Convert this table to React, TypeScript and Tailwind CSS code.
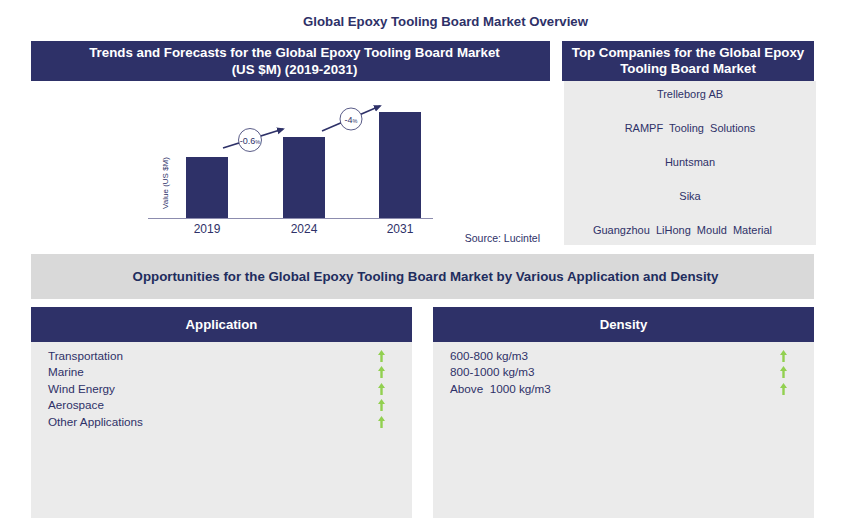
const applications = ['Transportation', 'Marine', 'Wind Energy', 'Aerospace', 'Other Applications'];
const densities = ['600-800 kg/m3', '800-1000 kg/m3', 'Above  1000 kg/m3'];
const companies = ['Trelleborg AB', 'RAMPF  Tooling  Solutions', 'Huntsman', 'Sika', 'Guangzhou  LiHong  Mould  Material'];

const bars = [
    { year: '2019', x: 155, top: 76 },
    { year: '2024', x: 252, top: 56 },
    { year: '2031', x: 348, top: 31 },
];

const UpArrow = () => (
    <svg width="7" height="12" viewBox="0 0 7 12">
        <polygon points="3.5,0 7,5 4.7,5 4.7,12 2.3,12 2.3,5 0,5" fill="#92d050" />
    </svg>
);

const Chart = () => (
    <svg width="519" height="164" viewBox="0 0 519 164" style={{ fontFamily: '"Liberation Sans", Arial, sans-serif' }}>
        <defs>
            <marker id="head" markerWidth="8" markerHeight="8" refX="6" refY="4" orient="auto" markerUnits="userSpaceOnUse">
                <polygon points="0,0.5 8,4 0,7.5" fill="#2e3168" />
            </marker>
        </defs>
        {bars.map((b) => (
            <g key={b.year}>
                <rect x={b.x} y={b.top} width="42" height={137 - b.top} fill="#2e3168" />
                <text x={b.x + 21} y="151.5" textAnchor="middle" fontSize="12" fill="#2e3168">{b.year}</text>
            </g>
        ))}
        <line x1="117" y1="137.5" x2="402" y2="137.5" stroke="#8c8cae" strokeWidth="1.2" />
        <text transform="translate(137 102) rotate(-90)" textAnchor="middle" fontSize="8" fill="#2e3168">Value (US $M)</text>

        <line x1="192" y1="67" x2="252" y2="48" stroke="#2e3168" strokeWidth="1.6" markerEnd="url(#head)" />
        <circle cx="219" cy="59" r="11.5" fill="#fff" stroke="#2e3168" strokeWidth="0.8" />
        <text x="219" y="62.5" textAnchor="middle" fontSize="9" fill="#2e3168">-0.6<tspan fontSize="5.5">%</tspan></text>

        <line x1="291" y1="50" x2="349" y2="25" stroke="#2e3168" strokeWidth="1.6" markerEnd="url(#head)" />
        <circle cx="320" cy="38" r="11" fill="#fff" stroke="#2e3168" strokeWidth="0.8" />
        <text x="320" y="41.5" textAnchor="middle" fontSize="9" fill="#2e3168">-4<tspan fontSize="5.5">%</tspan></text>

        <text x="509" y="161" textAnchor="end" fontSize="10.5" fill="#2e3168">Source: Lucintel</text>
    </svg>
);

const ListPanel = ({ title, items }: { title: string; items: string[] }) => (
    <div className="flex flex-col w-[381px]">
        <div className="h-[35px] bg-[#2e3168] text-white text-[13.2px] font-bold flex items-center justify-center">
            {title}
        </div>
        <div className="h-[176px] bg-[#ebebeb] flex flex-col pt-[5.5px] pl-[17px] pr-[27px]">
            {items.map((item) => (
                <div key={item} className="flex items-center justify-between h-[16.5px] text-[11.7px] text-[#2e3168] whitespace-pre">
                    <span>{item}</span>
                    <UpArrow />
                </div>
            ))}
        </div>
    </div>
);

export default function App() {
    return (
        <div className="w-[852px] h-[524px] bg-white pl-[31px] pt-[15px] font-['Liberation_Sans',Arial,sans-serif]">
            {/* title sits a bit right of the page centre in the original */}
            <h1 className="w-[783px] pl-[46px] text-center text-[13.2px] leading-[14px] font-bold text-[#2e3168]">
                Global Epoxy Tooling Board Market Overview
            </h1>

            <div className="flex mt-[12px]">
                <div className="w-[519px] flex flex-col">
                    <div className="h-[40px] pl-[8px] bg-[#2e3168] text-white text-[13.3px] font-bold leading-[17px] flex items-center justify-center text-center">
                        Trends and Forecasts for the Global Epoxy Tooling Board Market<br />(US $M) (2019-2031)
                    </div>
                    <Chart />
                </div>
                <div className="ml-[12px] w-[254px] flex flex-col">
                    <div className="w-[252px] h-[40px] bg-[#2e3168] text-white text-[13.3px] font-bold leading-[16px] flex items-center justify-center text-center">
                        Top Companies for the Global Epoxy<br />Tooling Board Market
                    </div>
                    <div className="ml-[2px] w-[252px] h-[164px] bg-[#ebebeb] flex flex-col items-center pt-[4px] gap-[16px]">
                        {companies.map((c, i) => (
                            <span key={c} className={i === companies.length - 1 ? 'leading-[18px] text-[11px] text-[#2e3168] whitespace-pre mr-[15px]' : 'leading-[18px] text-[11px] text-[#2e3168] whitespace-pre'}>{c}</span>
                        ))}
                    </div>
                </div>
            </div>

            <div className="mt-[9px] w-[783px] h-[45px] pl-[6px] bg-[#d9d9d9] flex items-center justify-center text-[13.3px] font-bold text-[#1f2d5e]">
                Opportunities for the Global Epoxy Tooling Board Market by Various Application and Density
            </div>

            <div className="mt-[8px] flex gap-[21px]">
                <ListPanel title="Application" items={applications} />
                <ListPanel title="Density" items={densities} />
            </div>
        </div>
    );
}
